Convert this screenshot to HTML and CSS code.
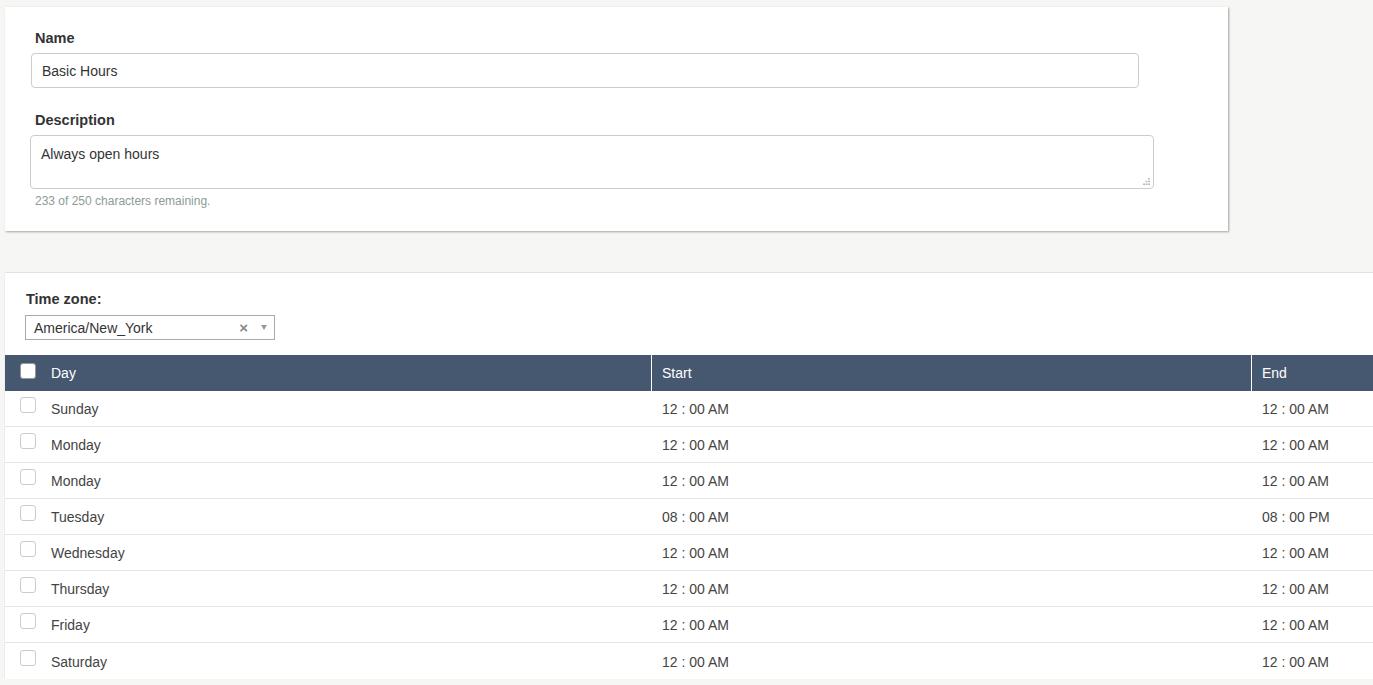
FILE: index.html
```html
<!DOCTYPE html>
<html>
<head>
<meta charset="utf-8">
<link rel="stylesheet" href="styles.css">
</head>
<body>
<div class="page">
  <div class="card card-form">
    <label class="field-label">Name</label>
    <div class="text-input">Basic Hours</div>
    <label class="field-label desc-label">Description</label>
    <div class="text-area">Always open hours
      <svg class="grip" width="7" height="7" viewBox="0 0 7 7"><rect x="5" y="0" width="2" height="1.5" fill="#bbb"/><rect x="2.5" y="2.75" width="2" height="1.5" fill="#bbb"/><rect x="5" y="2.75" width="2" height="1.5" fill="#bbb"/><rect x="0" y="5.5" width="2" height="1.5" fill="#bbb"/><rect x="2.5" y="5.5" width="2" height="1.5" fill="#bbb"/><rect x="5" y="5.5" width="2" height="1.5" fill="#bbb"/></svg>
    </div>
    <div class="helper">233 of 250 characters remaining.</div>
  </div>

  <div class="card card-table">
    <div class="tz">
      <label class="field-label tz-label">Time zone:</label>
      <div class="select">
        <span class="select-value">America/New_York</span>
        <span class="select-clear">&#215;</span>
        <span class="select-arrow"></span>
      </div>
    </div>
    <div class="grid">
      <div class="row head">
        <div class="cell c1"><span class="cb cb-head"></span>Day</div>
        <div class="cell c2">Start</div>
        <div class="cell c3">End</div>
      </div>
      <div class="row"><div class="cell c1"><span class="cb"></span>Sunday</div><div class="cell c2">12 : 00 AM</div><div class="cell c3">12 : 00 AM</div></div>
      <div class="row"><div class="cell c1"><span class="cb"></span>Monday</div><div class="cell c2">12 : 00 AM</div><div class="cell c3">12 : 00 AM</div></div>
      <div class="row"><div class="cell c1"><span class="cb"></span>Monday</div><div class="cell c2">12 : 00 AM</div><div class="cell c3">12 : 00 AM</div></div>
      <div class="row"><div class="cell c1"><span class="cb"></span>Tuesday</div><div class="cell c2">08 : 00 AM</div><div class="cell c3">08 : 00 PM</div></div>
      <div class="row"><div class="cell c1"><span class="cb"></span>Wednesday</div><div class="cell c2">12 : 00 AM</div><div class="cell c3">12 : 00 AM</div></div>
      <div class="row"><div class="cell c1"><span class="cb"></span>Thursday</div><div class="cell c2">12 : 00 AM</div><div class="cell c3">12 : 00 AM</div></div>
      <div class="row"><div class="cell c1"><span class="cb"></span>Friday</div><div class="cell c2">12 : 00 AM</div><div class="cell c3">12 : 00 AM</div></div>
      <div class="row last"><div class="cell c1"><span class="cb"></span>Saturday</div><div class="cell c2">12 : 00 AM</div><div class="cell c3">12 : 00 AM</div></div>
    </div>
  </div>
</div>
</body>
</html>
```
FILE: styles.css
```css
html, body {
  margin: 0;
  padding: 0;
  overflow: hidden;
}
body {
  background: #f6f6f4;
  font-family: "Liberation Sans", Arial, sans-serif;
  color: #444;
  font-size: 14px;
}
.page {
  padding: 7px 0 0 5px;
}
.card {
  background: #fff;
  box-shadow: 1px 1px 2px rgba(0, 0, 0, 0.35);
  box-sizing: border-box;
}
.card-form {
  width: 1223px;
  height: 224px;
  padding: 23px 0 0 26px;
}
.field-label {
  display: block;
  font-size: 14.5px;
  font-weight: bold;
  color: #333;
  line-height: 16px;
  margin-left: 4px;
}
.text-input {
  margin-top: 7px;
  width: 1108px;
  height: 35px;
  box-sizing: border-box;
  border: 1px solid #ccc;
  border-radius: 4px;
  padding: 0 10px;
  line-height: 34px;
  color: #333;
}
.desc-label {
  margin-top: 24px;
}
.text-area {
  position: relative;
  margin-top: 7px;
  margin-left: -1px;
  width: 1124px;
  height: 54px;
  box-sizing: border-box;
  border: 1px solid #ccc;
  border-radius: 4px;
  padding: 9px 10px;
  line-height: 18px;
  color: #333;
}
.grip {
  position: absolute;
  right: 3px;
  bottom: 3px;
}
.helper {
  margin: 5px 0 0 4px;
  font-size: 12px;
  line-height: 14px;
  color: #8b9c93;
}
.card-table {
  margin-top: 42px;
  width: 1500px;
  padding-top: 18px;
  box-shadow: 1px 1px 2px rgba(0, 0, 0, 0.4), 0 -1px 1px rgba(0, 0, 0, 0.05);
}
.tz {
  padding-left: 20px;
}
.tz-label {
  margin-left: 1px;
}
.select {
  margin-top: 8px;
  width: 250px;
  height: 25px;
  box-sizing: border-box;
  border: 1px solid #aaa;
  display: flex;
  align-items: center;
  padding-left: 8px;
  color: #333;
}
.select-value {
  flex: 1;
}
.select-clear {
  color: #888;
  font-size: 15px;
  font-weight: bold;
  margin-right: 13px;
  line-height: 14px;
}
.select-arrow {
  width: 0;
  height: 0;
  border-left: 3.5px solid transparent;
  border-right: 3.5px solid transparent;
  border-top: 5px solid #999;
  margin-right: 7px;
}
.grid {
  margin-top: 15px;
}
.row {
  display: grid;
  grid-template-columns: 646px 600px 1fr;
  height: 36px;
  box-sizing: border-box;
  border-bottom: 1px solid #e4e4e4;
}
.row.last {
  border-bottom: none;
}
.row.head {
  height: 36px;
  background: #465870;
  color: #fff;
  border-bottom: none;
}
.cell {
  display: flex;
  align-items: center;
  padding-top: 1px;
}
.row.head .cell {
  padding-top: 0;
}
.c1 {
  padding-left: 15px;
}
.row .c2, .row .c3 {
  padding-left: 11px;
}
.row.head .c2, .row.head .c3 {
  border-left: 1px solid #fff;
  padding-left: 10px;
}
.cb {
  width: 14px;
  height: 14px;
  border: 1px solid #ccc;
  border-radius: 3px;
  margin-right: 15px;
  margin-top: -8px;
  background: #fff;
}
.cb-head {
  border-color: #999;
  margin-top: -4px;
}
```
